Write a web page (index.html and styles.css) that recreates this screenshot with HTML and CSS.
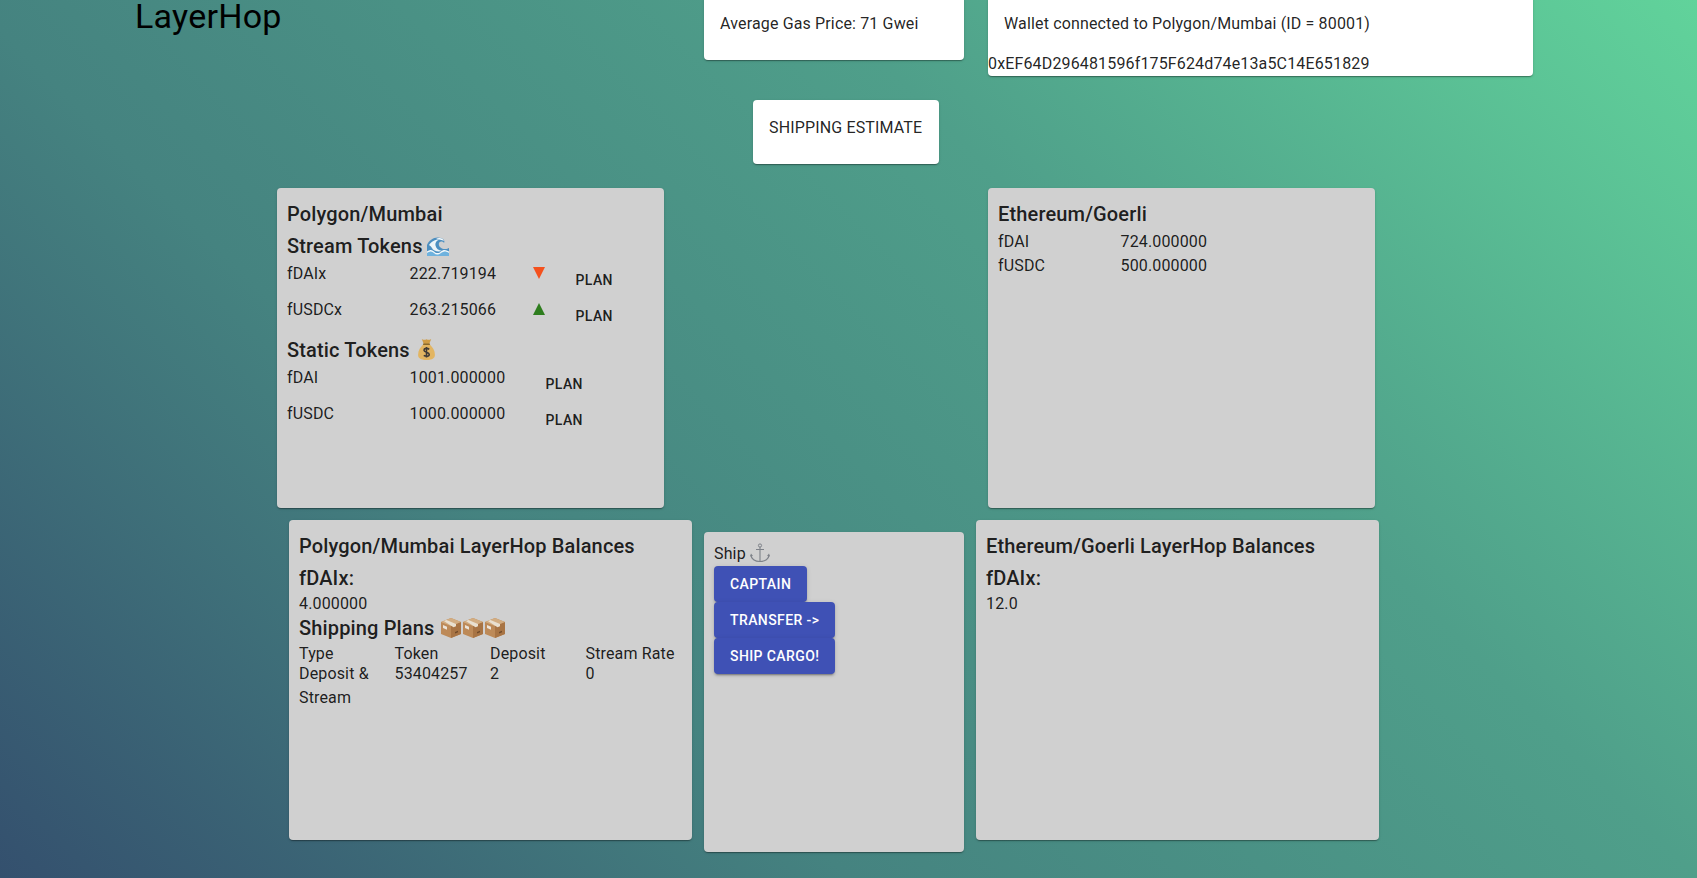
FILE: index.html
```html
<!DOCTYPE html>
<html lang="en">
  <head>
    <meta charset="UTF-8" />
    <meta name="viewport" content="width=device-width, initial-scale=1.0" />
    <title>LayerHop</title>
    <link rel="stylesheet" href="styles.css">
  </head>
  <body>
    <svg class="defs" width="0" height="0">
      <symbol id="box" viewBox="0 0 22 22">
        <path d="M11 1 21 5v12l-10 4-10-4V5z" fill="#bd8a58" />
        <path d="M11 9 21 5v12l-10 4z" fill="#a87444" />
        <path d="M11 1 21 5 11 9 1 5z" fill="#d2ad82" />
        <path d="M6.500 3 16 6.900v2.400L13.500 10.300 3.900 4z" fill="#e9e0d0" />
        <path d="M3 8l4 1.700v3L3 11z" fill="#ece4d8" />
        <path d="M15 15l3-1.200v1.500l-3 1.200z" fill="#6f4a2a" />
      </symbol>
    </svg>

    <div class="page">
      <div class="top-row">
        <h1 class="logo">LayerHop</h1>
        <div class="card white gas">Average Gas Price: 71 Gwei</div>
        <div class="card white wallet">
          <p class="wallet-net">Wallet connected to Polygon/Mumbai (ID = 80001)</p>
          <p class="wallet-addr">0xEF64D296481596f175F624d74e13a5C14E651829</p>
        </div>
      </div>

      <div class="estimate-row">
        <div class="card white estimate">SHIPPING ESTIMATE</div>
      </div>

      <div class="token-row">
        <div class="card token-card">
          <h2>Polygon/Mumbai</h2>
          <h2>Stream Tokens
            <svg class="emoji wave" viewBox="0 0 22 19">
              <path d="M0 8C2 3 8-1 14 1c3 1 4 3 3 5-1-2-4-2-5 0-1 3 2 6 6 6 2 0 3-.5 4-1v8H0z" fill="#4d8fc0" />
              <path d="M2 8c2-3 6-6 11-5.500-3 .5-5 3-4.500 6 .5 3 3 5 6.500 5.500-4 1-9 0-10-3-.5-1-1.500-2-3-3z" fill="#eef5f8" />
              <path d="M9 2c3-2 7-1 8 2-2-1.500-5-1.500-8-2z" fill="#f7fbfc" />
              <path d="M0 15c3-2 5-2 7 0s5 2 7 0 5-2 8 0v4H0z" fill="#6fb2de" />
              <path d="M0 14.500c3-2 5-2 7 0s5 2 7 0 5-2 8 0v1.500c-3-2-5-2-8 0s-5 2-7 0-4-2-7 0z" fill="#f4f9fb" />
            </svg>
          </h2>
          <div class="token-line">
            <span class="name">fDAIx</span><span class="value">222.719194</span>
            <span class="arrow down"></span>
            <button class="plan">Plan</button>
          </div>
          <div class="token-line">
            <span class="name">fUSDCx</span><span class="value">263.215066</span>
            <span class="arrow up"></span>
            <button class="plan">Plan</button>
          </div>
          <h2>Static Tokens
            <svg class="emoji bag" viewBox="0 0 16 20">
              <path d="M3.500 0c1.500 1 3 1 4.500.300C9.500 1 11 1 12.500 0l-2 5h-5z" fill="#cf9c45" />
              <path d="M5 5h6c3 3 5 6 5 10 0 3-2 5-8 5s-8-2-8-5c0-4 2-7 5-10z" fill="#e2b562" />
              <rect x="4.600" y="4.300" width="6.800" height="1.500" rx=".7" fill="#8a6a2e" />
              <path d="M10.600 9.800C9 8.400 5.600 8.600 5.600 10.700c0 2.400 5 1.500 5 4 0 2.100-3.400 2.100-5.200.8M8 7.500v10" fill="none" stroke="#3f3a36" stroke-width="1.500" />
            </svg>
          </h2>
          <div class="token-line static">
            <span class="name">fDAI</span><span class="value">1001.000000</span>
            <button class="plan">Plan</button>
          </div>
          <div class="token-line static">
            <span class="name">fUSDC</span><span class="value">1000.000000</span>
            <button class="plan">Plan</button>
          </div>
        </div>

        <div class="card token-card">
          <h2>Ethereum/Goerli</h2>
          <div class="token-line short">
            <span class="name">fDAI</span><span class="value">724.000000</span>
          </div>
          <div class="token-line short">
            <span class="name">fUSDC</span><span class="value">500.000000</span>
          </div>
        </div>
      </div>

      <div class="balance-row">
        <div class="card balance-card">
          <h2>Polygon/Mumbai LayerHop Balances</h2>
          <h2 class="bal-token">fDAIx:</h2>
          <p class="bal-value">4.000000</p>
          <h2 class="plans-title">Shipping Plans
            <svg class="emoji box"><use href="#box" /></svg><svg class="emoji box"><use href="#box" /></svg><svg class="emoji box"><use href="#box" /></svg>
          </h2>
          <div class="plans-head">
            <span>Type</span><span>Token</span><span>Deposit</span><span>Stream Rate</span>
          </div>
          <div class="plans-body">
            <span>Deposit &amp; Stream</span><span>53404257</span><span>2</span><span>0</span>
          </div>
        </div>

        <div class="card ship-card">
          <p class="ship-title">Ship
            <svg class="emoji anchor" viewBox="0 0 20 20">
              <circle cx="10" cy="2.500" r="1.600" fill="none" stroke="#7d8188" stroke-width="1" />
              <path d="M10 4v15M6 6.500h8M1 12c0 4 4 6.500 9 6.500s9-2.500 9-6.500" fill="none" stroke="#7d8188" stroke-width="1.100" />
              <path d="M0 13.500 1 10.500l2 2.500zM20 13.500l-1-3-2 2.500z" fill="#7d8188" />
            </svg>
          </p>
          <button class="action">Captain</button>
          <button class="action">Transfer -&gt;</button>
          <button class="action">Ship Cargo!</button>
        </div>

        <div class="card balance-card">
          <h2>Ethereum/Goerli LayerHop Balances</h2>
          <h2 class="bal-token">fDAIx:</h2>
          <p class="bal-value">12.0</p>
        </div>
      </div>
    </div>
  </body>
</html>
```

FILE: styles.css
```css
html,
body {
  margin: 0;
  height: 100%;
  overflow: hidden;
}

body {
  font-family: "Roboto", "Liberation Sans", sans-serif;
  font-size: 16px;
  line-height: 24px;
  letter-spacing: 0.15px;
  color: rgba(0, 0, 0, 0.87);
  background: linear-gradient(45deg, #34506e 0%, #458380 33%, #4f9f8a 66%, #61d39b 100%);
}

.defs {
  position: absolute;
}

.page {
  margin-top: -4px;
}

p {
  margin: 0;
}

h2 {
  margin: 0;
  font-size: 20px;
  font-weight: 500;
  line-height: 32px;
}

.card {
  box-sizing: border-box;
  background-color: #d0d0d0;
  border-radius: 4px;
  box-shadow: 0 2px 1px -1px rgba(0, 0, 0, 0.2), 0 1px 1px 0 rgba(0, 0, 0, 0.14),
    0 1px 3px 0 rgba(0, 0, 0, 0.12);
}

.card.white {
  background-color: #ffffff;
}

.top-row {
  display: flex;
  align-items: flex-start;
  padding-left: 135px;
}

.logo {
  width: 569px;
  margin: -1px 0 0;
  font-size: 34px;
  font-weight: 400;
  line-height: 42px;
  letter-spacing: 0.25px;
  color: #000000;
}

.gas {
  width: 260px;
  height: 64px;
  padding: 16px;
}

.wallet {
  width: 545px;
  height: 80px;
  margin-left: 24px;
  padding-top: 16px;
}

.wallet-net {
  padding-left: 16px;
}

.wallet-addr {
  margin-top: 16px;
}

.estimate-row {
  margin-top: 24px;
  padding-left: 753px;
}

.estimate {
  width: 186px;
  height: 64px;
  padding: 16px;
  white-space: nowrap;
}

.token-row {
  display: flex;
  gap: 324px;
  margin-top: 24px;
  padding-left: 277px;
}

.token-card {
  width: 387px;
  height: 320px;
  padding: 10px;
}

.token-line {
  display: flex;
  height: 36px;
}

.token-line.short {
  height: 24px;
}

.name {
  width: 122.5px;
}

.value {
  width: 123.5px;
}

.static .value {
  width: 128px;
}

.arrow {
  width: 0;
  height: 0;
  margin-top: 5px;
  border-left: 6px solid transparent;
  border-right: 6px solid transparent;
}

.arrow.down {
  border-top: 12px solid #f4511e;
}

.arrow.up {
  border-bottom: 12px solid #2e7d1e;
}

.plan {
  height: 36px;
  margin-left: 22.5px;
  padding: 6px 8px;
  border: none;
  background: none;
  font-family: inherit;
  font-size: 14px;
  font-weight: 500;
  letter-spacing: 0.4px;
  text-transform: uppercase;
  color: rgba(0, 0, 0, 0.87);
}

.static .plan {
  margin-left: 0;
}

.emoji {
  vertical-align: -3px;
}

.wave {
  width: 22px;
  height: 19px;
  margin-left: -1px;
}

.bag {
  width: 17px;
  height: 21px;
  margin-left: 3px;
}

.box {
  width: 22px;
  height: 22px;
  vertical-align: -4px;
}

.anchor {
  width: 20px;
  height: 20px;
  vertical-align: -4px;
}

.balance-row {
  display: flex;
  align-items: flex-start;
  gap: 12px;
  margin-top: 12px;
  padding-left: 289px;
}

.balance-card {
  width: 403px;
  height: 320px;
  padding: 10px;
}

.bal-token {
  margin-bottom: -2px;
}

.plans-title {
  margin-bottom: 2px;
  line-height: 24px;
}

.plans-head,
.plans-body {
  display: grid;
  grid-template-columns: repeat(4, 95.5px);
}

.plans-head {
  height: 19.5px;
  white-space: nowrap;
}

.ship-card {
  width: 260px;
  height: 320px;
  margin-top: 12px;
  padding: 10px;
}

.action {
  display: block;
  height: 36px;
  padding: 6px 16px;
  border: none;
  border-radius: 4px;
  background-color: #3f51b5;
  box-shadow: 0 3px 1px -2px rgba(0, 0, 0, 0.2), 0 2px 2px 0 rgba(0, 0, 0, 0.14),
    0 1px 5px 0 rgba(0, 0, 0, 0.12);
  font-family: inherit;
  font-size: 14px;
  font-weight: 500;
  letter-spacing: 0.4px;
  text-transform: uppercase;
  color: #ffffff;
}
```
